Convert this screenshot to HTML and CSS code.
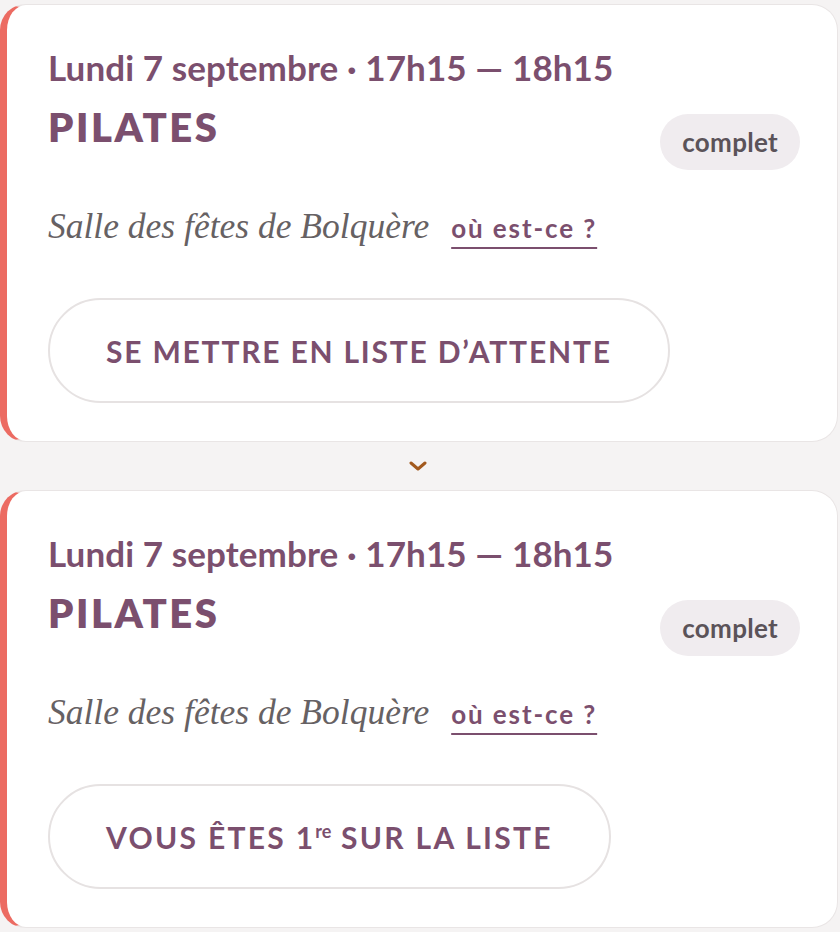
FILE: index.html
```html
<!DOCTYPE html>
<html lang="fr">
<head>
<meta charset="utf-8">
<title>Séances</title>
<link rel="stylesheet" href="styles.css">
</head>
<body>
<div class="list">
  <section class="card">
    <div class="head">
      <div class="info">
        <div class="date">Lundi 7 septembre · 17h15 — 18h15</div>
        <div class="title">PILATES</div>
      </div>
      <span class="pill">complet</span>
    </div>
    <div class="place">
      <span class="venue">Salle des fêtes de Bolquère</span>
      <a class="where" href="#">où est-ce ?</a>
    </div>
    <button class="btn">SE METTRE EN LISTE D’ATTENTE</button>
  </section>
  <div class="sep">
    <svg class="chev" width="18" height="10" viewBox="0 0 18 10"><path d="M2 2 L9 8 L16 2" fill="none" stroke="#a2591d" stroke-width="3" stroke-linecap="round" stroke-linejoin="round"/></svg>
  </div>
  <section class="card">
    <div class="head">
      <div class="info">
        <div class="date">Lundi 7 septembre · 17h15 — 18h15</div>
        <div class="title">PILATES</div>
      </div>
      <span class="pill">complet</span>
    </div>
    <div class="place">
      <span class="venue">Salle des fêtes de Bolquère</span>
      <a class="where" href="#">où est-ce ?</a>
    </div>
    <button class="btn btn-wide">VOUS ÊTES 1<sup>re</sup> SUR LA LISTE</button>
  </section>
</div>
</body>
</html>
```
FILE: styles.css
```css
* { box-sizing: border-box; }
html, body { margin: 0; padding: 0; }
body {
  background: #f5f3f3;
  font-family: Lato, "Noto Sans", sans-serif;
  color: #7b4f6e;
}
.list {
  display: flex;
  flex-direction: column;
  padding: 4px 2px 0 0;
}
.card {
  display: flex;
  flex-direction: column;
  align-items: flex-start;
  background: #ffffff;
  border: 1px solid #e9e5e5;
  border-left: 7px solid #ec6b62;
  border-radius: 26px;
  padding: 42px 37px 37px 41px;
  height: 438px;
}
.head {
  width: 100%;
  display: flex;
  justify-content: space-between;
  align-items: flex-start;
}
.date {
  font-weight: 700;
  font-size: 35px;
  line-height: 40px;
  letter-spacing: 0.1px;
}
.title {
  margin-top: 17px;
  font-weight: 800;
  font-size: 40px;
  line-height: 46px;
  letter-spacing: 2.5px;
}
.pill {
  margin-top: 67px;
  height: 56px;
  padding: 0 22px;
  border-radius: 28px;
  background: #f0ecef;
  color: #5b5359;
  font-weight: 700;
  font-size: 26px;
  line-height: 56px;
  letter-spacing: 0.3px;
}
.place {
  display: flex;
  align-items: baseline;
  gap: 22px;
  margin-top: 34px;
}
.venue {
  font-family: "Liberation Serif", serif;
  font-style: italic;
  font-size: 35.5px;
  line-height: 44px;
  color: #666163;
}
.where {
  color: #7b4f6e;
  font-weight: 700;
  font-size: 26px;
  letter-spacing: 1.9px;
  text-decoration: underline;
  text-decoration-thickness: 2px;
  text-underline-offset: 9px;
}
.btn {
  margin-top: 50px;
  height: 105px;
  padding: 0 56px;
  border: 2px solid #e6e2e2;
  border-radius: 53px;
  background: #ffffff;
  color: #7b4f6e;
  font-family: Lato, "Noto Sans", sans-serif;
  font-weight: 700;
  font-size: 30px;
  letter-spacing: 1.8px;
}
.btn-wide { letter-spacing: 2.3px; }
.btn sup {
  font-size: 18px;
  letter-spacing: 0;
  vertical-align: 11px;
  line-height: 0;
}
.sep {
  height: 48px;
  display: flex;
  align-items: center;
  justify-content: center;
}
.chev { display: block; margin-left: -2px; }
```
